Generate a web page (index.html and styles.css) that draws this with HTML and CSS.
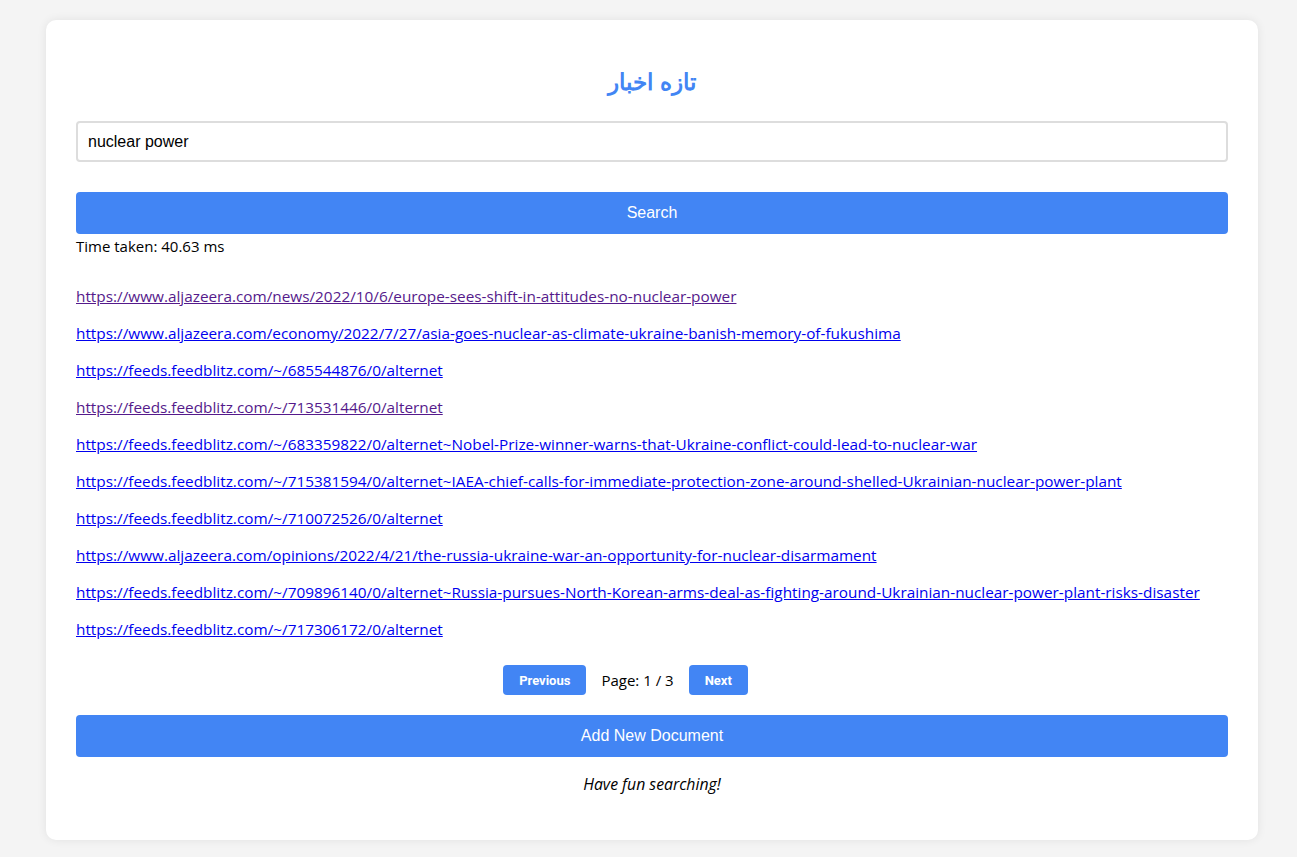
FILE: index.html
```html
<!DOCTYPE html>
<html lang="en">
<head>
<meta charset="utf-8">
<title>تازه اخبار</title>
<link rel="stylesheet" href="styles.css">
</head>
<body>
<div class="card">
  <h1 class="title">تازه اخبار</h1>
  <input class="search-input" type="text" value="nuclear power">
  <button class="btn btn-wide search-btn">Search</button>
  <div class="time">Time taken: 40.63 ms</div>
  <ul class="results">
    <li><a class="visited" href="#">https://www.aljazeera.com/news/2022/10/6/europe-sees-shift-in-attitudes-no-nuclear-power</a></li>
    <li><a href="#">https://www.aljazeera.com/economy/2022/7/27/asia-goes-nuclear-as-climate-ukraine-banish-memory-of-fukushima</a></li>
    <li><a href="#">https://feeds.feedblitz.com/~/685544876/0/alternet</a></li>
    <li><a class="visited" href="#">https://feeds.feedblitz.com/~/713531446/0/alternet</a></li>
    <li><a href="#">https://feeds.feedblitz.com/~/683359822/0/alternet~Nobel-Prize-winner-warns-that-Ukraine-conflict-could-lead-to-nuclear-war</a></li>
    <li><a href="#">https://feeds.feedblitz.com/~/715381594/0/alternet~IAEA-chief-calls-for-immediate-protection-zone-around-shelled-Ukrainian-nuclear-power-plant</a></li>
    <li><a href="#">https://feeds.feedblitz.com/~/710072526/0/alternet</a></li>
    <li><a href="#">https://www.aljazeera.com/opinions/2022/4/21/the-russia-ukraine-war-an-opportunity-for-nuclear-disarmament</a></li>
    <li><a href="#">https://feeds.feedblitz.com/~/709896140/0/alternet~Russia-pursues-North-Korean-arms-deal-as-fighting-around-Ukrainian-nuclear-power-plant-risks-disaster</a></li>
    <li><a href="#">https://feeds.feedblitz.com/~/717306172/0/alternet</a></li>
  </ul>
  <div class="pager">
    <button class="btn btn-small">Previous</button>
    <span class="page-info">Page: 1 / 3</span>
    <button class="btn btn-small">Next</button>
  </div>
  <button class="btn btn-wide add-btn">Add New Document</button>
  <p class="footer-note">Have fun searching!</p>
</div>
</body>
</html>
```

FILE: styles.css
```css
html, body {
  margin: 0;
  padding: 0;
}
body {
  background: #f4f4f4;
  font-family: "Open Sans", "Noto Sans", sans-serif;
  font-size: 15px;
  color: #000;
  padding: 20px 0 17px;
}
.card {
  width: 1152px;
  margin: 0 39px 0 46px;
  background: #fff;
  border-radius: 10px;
  padding: 30px 30px 46px;
  box-shadow: 0 0 10px rgba(0, 0, 0, 0.08);
}
.title {
  margin: 18px 0 25px;
  text-align: center;
  color: #4285f4;
  font-family: "Liberation Sans", Arial, sans-serif;
  font-size: 23px;
  font-weight: bold;
  line-height: 28px;
}
.search-input {
  display: block;
  box-sizing: border-box;
  width: 100%;
  height: 41px;
  border: 2px solid #ddd;
  border-radius: 4px;
  padding: 0 10px;
  font-family: "Liberation Sans", Arial, sans-serif;
  font-size: 16px;
  color: #000;
  margin: 0 0 30px;
}
.btn {
  background: #4285f4;
  color: #fff;
  border: none;
  border-radius: 4px;
  cursor: pointer;
}
.btn-wide {
  display: block;
  width: 100%;
  height: 42px;
  font-family: "Liberation Sans", Arial, sans-serif;
  font-size: 16px;
}
.time {
  line-height: 24px;
  margin-bottom: 28px;
}
.results {
  list-style: none;
  margin: 0;
  padding: 0;
  display: flex;
  flex-direction: column;
  gap: 17px;
}
.results li {
  line-height: 20px;
  font-size: 15.33px;
}
.results a {
  color: #0000ee;
  text-decoration: underline;
}
.results a.visited {
  color: #551a8b;
}
.pager {
  display: flex;
  justify-content: center;
  align-items: center;
  gap: 15px;
  margin: 26px 0 20px;
  padding-right: 53px;
}
.btn-small {
  height: 30px;
  padding: 0 16px;
  font-family: Roboto, "Liberation Sans", sans-serif;
  font-weight: bold;
  font-size: 13px;
}
.page-info {
  font-size: 15px;
}
.footer-note {
  text-align: center;
  font-style: italic;
  font-size: 15.8px;
  margin: 17px 0 0;
  line-height: 20px;
}
```
